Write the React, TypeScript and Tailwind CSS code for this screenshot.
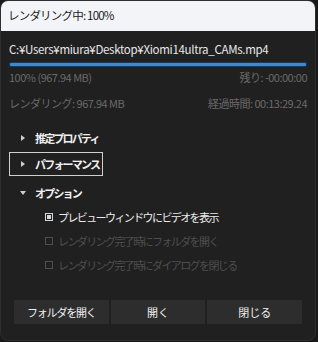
import { useState } from "react";

// Render progress dialog (dark theme)
export default function App() {
  const [showPreview, setShowPreview] = useState(true);

  return (
    <div
      className="w-[318px] h-[342px] bg-[#191919] text-[11px] leading-none"
      style={{ fontFamily: '"Noto Sans CJK JP", "Noto Sans", sans-serif' }}
    >
      <div className="w-[316px] h-[341px] rounded-[8px] border border-[#2e2e2e] bg-[#202020] overflow-hidden flex flex-col">
        {/* Title bar */}
        <div className="h-[30px] bg-[#f3f4f8] flex items-center px-[7px] text-[#1a1a1a] text-[11.5px] tracking-[-0.8px]">
          レンダリング中: 100%
        </div>

        <div className="flex flex-col px-[8px] pt-[13px] flex-1">
          <div className="text-[#e8e8e8] text-[11.5px] tracking-[-0.3px] h-[16px]">C:¥Users¥miura¥Desktop¥Xiomi14ultra_CAMs.mp4</div>

          {/* Progress bar */}
          <div className="mt-[2px] h-[5px] bg-[#143a63] rounded-[2px] p-[1px]">
            <div className="h-full w-full bg-[#3d8ad0] rounded-[1px]" />
          </div>

          <div className="mt-[3px] flex justify-between text-[#6a6a6a] text-[11px] tracking-[-0.5px] h-[14px] items-center">
            <span>100% (967.94 MB)</span>
            <span>残り: -00:00:00</span>
          </div>
          <div className="mt-[12px] flex justify-between text-[#6a6a6a] text-[11px] tracking-[-0.5px] h-[14px] items-center">
            <span>レンダリング: 967.94 MB</span>
            <span>経過時間: 00:13:29.24</span>
          </div>

          {/* Expanders */}
          <div className="mt-[16px] flex flex-col">
            <div className="h-[24px] flex items-center pl-[12px] text-[#f0f0f0] font-semibold tracking-[-1.8px]">
              <span className="w-0 h-0 border-y-[3.5px] border-y-transparent border-l-[4px] border-l-[#cfcfcf] mr-[10px]" />
              推定プロパティ
            </div>
            <div className="mt-[2px] w-[94px] h-[24px] border border-[#d0d0d0] flex items-center pl-[11px] text-[#f0f0f0] font-semibold tracking-[-1.8px] whitespace-nowrap">
              <span className="w-0 h-0 border-y-[3.5px] border-y-transparent border-l-[4px] border-l-[#cfcfcf] mr-[10px]" />
              パフォーマンス
            </div>
            <div className="mt-[5px] h-[24px] flex items-center pl-[11px] text-[#f0f0f0] font-semibold tracking-[-1.8px]">
              <span className="w-0 h-0 border-x-[3.5px] border-x-transparent border-t-[4px] border-t-[#cfcfcf] mr-[9px]" />
              オプション
            </div>

            <div className="flex flex-col pl-[36px]">
              <label className="h-[24px] flex items-center gap-[5px] text-[#ececec] tracking-[-1.6px]" onClick={() => setShowPreview(!showPreview)}>
                <span className="w-[8px] h-[8px] border border-[#d8d8d8] flex items-center justify-center">
                  {showPreview && <span className="w-[4px] h-[4px] bg-[#d8d8d8]" />}
                </span>
                プレビューウィンドウにビデオを表示
              </label>
              <label className="h-[24px] flex items-center gap-[5px] text-[#4e4e4e] tracking-[-1.6px]">
                <span className="w-[8px] h-[8px] border border-[#4e4e4e]" />
                レンダリング完了時にフォルダを開く
              </label>
              <label className="h-[24px] flex items-center gap-[5px] text-[#4e4e4e] tracking-[-1.6px]">
                <span className="w-[8px] h-[8px] border border-[#4e4e4e]" />
                レンダリング完了時にダイアログを閉じる
              </label>
            </div>
          </div>

          {/* Buttons */}
          <div className="mt-auto mb-[16px] grid grid-cols-3 gap-[2px] px-[5px]">
            <button className="h-[24px] bg-[#2d2d2d] text-[#f0f0f0] tracking-[-1.2px]">フォルダを開く</button>
            <button className="h-[24px] bg-[#2d2d2d] text-[#f0f0f0]">開く</button>
            <button className="h-[24px] bg-[#2d2d2d] text-[#f0f0f0]">閉じる</button>
          </div>
        </div>
      </div>
    </div>
  );
}
